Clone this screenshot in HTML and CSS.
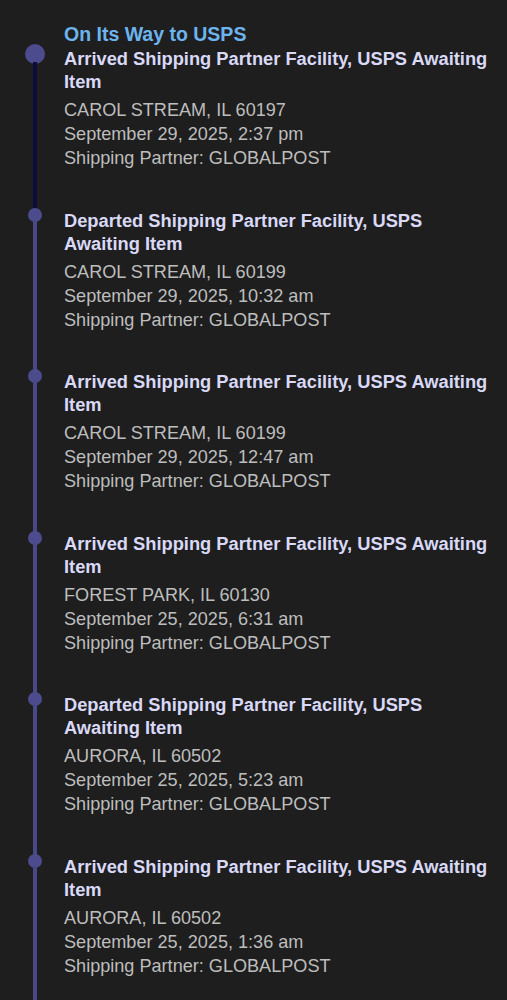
FILE: index.html
```html
<!DOCTYPE html>
<html lang="en">
<head>
    <meta charset="UTF-8">
    <meta name="viewport" content="width=device-width, initial-scale=1.0">
    <title>Tracking History</title>
    <link rel="stylesheet" href="styles.css">
</head>
<body>

<div class="tracking">
    <h2 class="status">On Its Way to USPS</h2>

    <div class="event event-current">
        <div class="rail"><span class="dot"></span><span class="line"></span></div>
        <div class="info">
            <h3>Arrived Shipping Partner Facility, USPS Awaiting Item</h3>
            <p>CAROL STREAM, IL 60197<br>September 29, 2025, 2:37 pm<br>Shipping Partner: GLOBALPOST</p>
        </div>
    </div>

    <div class="event">
        <div class="rail"><span class="dot"></span><span class="line"></span></div>
        <div class="info">
            <h3>Departed Shipping Partner Facility, USPS Awaiting Item</h3>
            <p>CAROL STREAM, IL 60199<br>September 29, 2025, 10:32 am<br>Shipping Partner: GLOBALPOST</p>
        </div>
    </div>

    <div class="event">
        <div class="rail"><span class="dot"></span><span class="line"></span></div>
        <div class="info">
            <h3>Arrived Shipping Partner Facility, USPS Awaiting Item</h3>
            <p>CAROL STREAM, IL 60199<br>September 29, 2025, 12:47 am<br>Shipping Partner: GLOBALPOST</p>
        </div>
    </div>

    <div class="event">
        <div class="rail"><span class="dot"></span><span class="line"></span></div>
        <div class="info">
            <h3>Arrived Shipping Partner Facility, USPS Awaiting Item</h3>
            <p>FOREST PARK, IL 60130<br>September 25, 2025, 6:31 am<br>Shipping Partner: GLOBALPOST</p>
        </div>
    </div>

    <div class="event">
        <div class="rail"><span class="dot"></span><span class="line"></span></div>
        <div class="info">
            <h3>Departed Shipping Partner Facility, USPS Awaiting Item</h3>
            <p>AURORA, IL 60502<br>September 25, 2025, 5:23 am<br>Shipping Partner: GLOBALPOST</p>
        </div>
    </div>

    <div class="event">
        <div class="rail"><span class="dot"></span><span class="line"></span></div>
        <div class="info">
            <h3>Arrived Shipping Partner Facility, USPS Awaiting Item</h3>
            <p>AURORA, IL 60502<br>September 25, 2025, 1:36 am<br>Shipping Partner: GLOBALPOST</p>
        </div>
    </div>
</div>

</body>
</html>
```

FILE: styles.css
```css
body {
    font-family: 'Liberation Sans', Arial, Helvetica, sans-serif;
    margin: 0;
    padding: 0;
    background-color: #1e1e1e;
    color: #bdbdbd;
}
.tracking {
    padding: 22px 16px 0 0;
}
.status {
    margin: 0 0 0 64px;
    font-size: 19.5px;
    line-height: 25px;
    font-weight: bold;
    color: #6db4ee;
}
.event {
    display: grid;
    grid-template-columns: 64px 1fr;
}
.rail {
    display: flex;
    flex-direction: column;
    align-items: center;
    padding-left: 6px;
}
.dot {
    width: 14px;
    height: 14px;
    margin-top: -1px;
    border-radius: 50%;
    background-color: #4c4b8d;
    flex-shrink: 0;
}
.line {
    flex: 1;
    width: 4px;
    margin-top: -2px;
    background-color: #4a4988;
}
.event-current .dot {
    width: 20px;
    height: 20px;
    margin-top: -3px;
}
.event-current .line {
    background-color: #0c0c3e;
}
.event:last-child .line {
    min-height: 80px;
}
.info {
    padding-bottom: 38.6px;
}
.info h3 {
    margin: 0;
    font-size: 18.3px;
    line-height: 23px;
    font-weight: bold;
    color: #d9d9f7;
}
.info p {
    margin: 5px 0 0;
    font-size: 18.1px;
    line-height: 24px;
}
```
